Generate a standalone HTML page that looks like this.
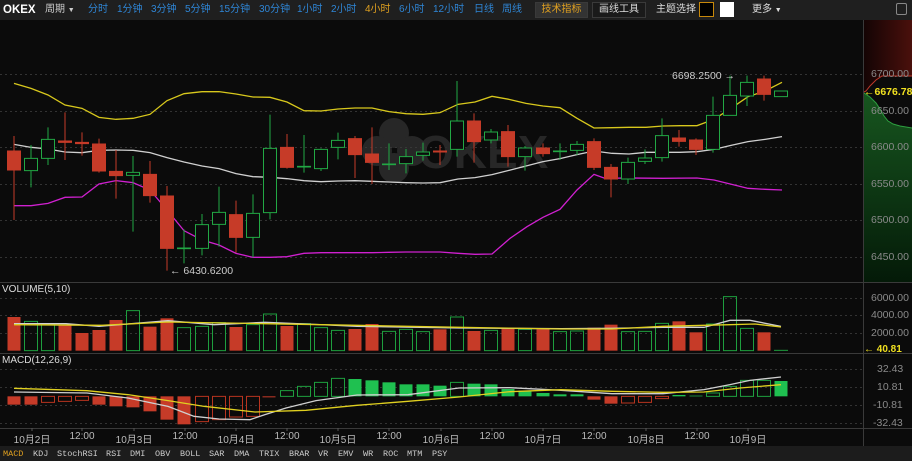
<!DOCTYPE html>
<html><head><meta charset="utf-8"><style>
*{margin:0;padding:0;box-sizing:border-box}
body{width:912px;height:461px;background:#0b0b0b;overflow:hidden;position:relative;font-family:"Liberation Sans","Noto Sans CJK SC",sans-serif}
.t{position:absolute;white-space:nowrap;font-size:10px;line-height:12px}
#top{position:absolute;left:0;top:0;width:912px;height:20px;background:#1f1f1f}
.b{color:#2f86d6}
.ax{color:#8a8a8a;font-size:10.5px}
.btn{position:absolute;top:2px;height:16px;border:1px solid #3a3a3a;font-size:10px;line-height:14px;text-align:center}
#bot{position:absolute;left:0;top:446px;width:912px;height:15px;background:#1c1c1c}
.m{position:absolute;top:3px;font-family:"Liberation Mono",monospace;font-size:8.5px;color:#ccc;line-height:10px}
.dl{color:#bbb;font-size:10px;position:absolute;top:431px;transform:translateX(-50%)}
</style></head><body>
<div id="top"></div>
<div class="t" style="left:3px;top:4px;color:#fff;font-weight:bold;font-size:11.5px">OKEX</div>
<div class="t" style="left:45px;top:4px;color:#ccc">周期 <span style="font-size:7px">▼</span></div>
<div class="t b" style="left:88px;top:4px">分时</div>
<div class="t b" style="left:117px;top:4px">1分钟</div>
<div class="t b" style="left:151px;top:4px">3分钟</div>
<div class="t b" style="left:185px;top:4px">5分钟</div>
<div class="t b" style="left:219px;top:4px">15分钟</div>
<div class="t b" style="left:259px;top:4px">30分钟</div>
<div class="t b" style="left:297px;top:4px">1小时</div>
<div class="t b" style="left:331px;top:4px">2小时</div>
<div class="t" style="left:365px;top:4px;color:#e0a020">4小时</div>
<div class="t b" style="left:399px;top:4px">6小时</div>
<div class="t b" style="left:433px;top:4px">12小时</div>
<div class="t b" style="left:474px;top:4px">日线</div>
<div class="t b" style="left:502px;top:4px">周线</div>
<div class="btn" style="left:535px;width:53px;background:#333;color:#e0a020">技术指标</div>
<div class="btn" style="left:592px;width:54px;background:#1a1a1a;color:#ddd">画线工具</div>
<div class="t" style="left:656px;top:4px;color:#ddd">主题选择</div>
<div style="position:absolute;left:699px;top:2px;width:15px;height:15px;background:#000;border:1px solid #c8880a"></div>
<div style="position:absolute;left:720px;top:2px;width:14px;height:15px;background:#fff"></div>
<div class="t" style="left:752px;top:4px;color:#ddd">更多 <span style="font-size:7px">▼</span></div>
<div style="position:absolute;left:896px;top:3px;width:11px;height:12px;border:1px solid #888;border-radius:2px"></div>

<svg width="912" height="461" style="position:absolute;left:0;top:0">
<defs>
<linearGradient id="rg" x1="0" y1="0" x2="1" y2="0"><stop offset="0" stop-color="#140404"/><stop offset="1" stop-color="#4a100c"/></linearGradient>
<linearGradient id="gg" x1="0" y1="0" x2="0" y2="1"><stop offset="0" stop-color="#17561f"/><stop offset="1" stop-color="#041a08"/></linearGradient>
</defs>
<polygon points="864,20 912,20 912,76 882,76 876,80 870,86 866,91 864,92" fill="url(#rg)"/>
<polyline points="864,92 866,91 870,86 876,80 882,76 912,76" fill="none" stroke="#c0392b" stroke-width="1"/>
<polygon points="864,93 870,97 876,103 880,109 884,116 888,121 893,124 900,126 912,128 912,282 864,282" fill="url(#gg)"/>
<polyline points="864,93 870,97 876,103 880,109 884,116 888,121 893,124 900,126 912,128" fill="none" stroke="#2ea040"/>
<g stroke="#333" stroke-dasharray="2,3">
<line x1="0" y1="74.5" x2="863" y2="74.5"/><line x1="0" y1="111.5" x2="863" y2="111.5"/><line x1="0" y1="147.5" x2="863" y2="147.5"/><line x1="0" y1="184.5" x2="863" y2="184.5"/><line x1="0" y1="220.5" x2="863" y2="220.5"/><line x1="0" y1="257.5" x2="863" y2="257.5"/>
<line x1="0" y1="298.5" x2="863" y2="298.5"/><line x1="0" y1="315.5" x2="863" y2="315.5"/><line x1="0" y1="333.5" x2="863" y2="333.5"/>
<line x1="0" y1="369.5" x2="863" y2="369.5"/><line x1="0" y1="387.5" x2="863" y2="387.5"/><line x1="0" y1="405.5" x2="863" y2="405.5"/><line x1="0" y1="423.5" x2="863" y2="423.5"/>
</g>
<g stroke="#3a3a3a"><line x1="0" y1="282.5" x2="912" y2="282.5"/><line x1="0" y1="353.5" x2="912" y2="353.5"/><line x1="0" y1="428.5" x2="912" y2="428.5"/><line x1="863.5" y1="20" x2="863.5" y2="446"/></g>
<g fill="#3a3a3a" opacity="0.6"><circle cx="394" cy="133" r="15"/><circle cx="377" cy="151" r="15"/><circle cx="412" cy="151" r="15"/><circle cx="394" cy="168" r="15"/></g>
<text x="418" y="168" font-family="Liberation Sans" font-weight="bold" font-size="46" fill="#2c2c2c" opacity="0.85">OKEX</text>
<g stroke="#555"><line x1="32" y1="428" x2="32" y2="431"/><line x1="82" y1="428" x2="82" y2="431"/><line x1="134" y1="428" x2="134" y2="431"/><line x1="185" y1="428" x2="185" y2="431"/><line x1="236" y1="428" x2="236" y2="431"/><line x1="287" y1="428" x2="287" y2="431"/><line x1="338" y1="428" x2="338" y2="431"/><line x1="389" y1="428" x2="389" y2="431"/><line x1="441" y1="428" x2="441" y2="431"/><line x1="492" y1="428" x2="492" y2="431"/><line x1="543" y1="428" x2="543" y2="431"/><line x1="594" y1="428" x2="594" y2="431"/><line x1="646" y1="428" x2="646" y2="431"/><line x1="697" y1="428" x2="697" y2="431"/><line x1="748" y1="428" x2="748" y2="431"/></g>

<svg x="0" y="60" width="912" height="220" viewBox="0 0 912 660" preserveAspectRatio="none">
<g fill="none" stroke-width="1.3">
<polyline vector-effect="non-scaling-stroke" stroke="#d8c81c" points="14,70 31,85 48,105 65,135 82,145 99,172 116,178 133,175 150,163 167,122 184,101 202,95 219,95 236,102 253,111 270,112 287,126 304,152 321,153 338,147 355,144 372,144 389,155 406,161 423,163 440,158 458,133 475,126 492,109 509,118 526,130 543,138 560,143 577,175 594,204 612,203 629,202 646,202 663,198 680,197 697,197 714,178 731,145 748,110 765,93 782,67"/>
<polyline vector-effect="non-scaling-stroke" stroke="#d0d0d0" points="14,253 31,262 48,267 65,276 82,278 99,271 116,270 133,271 150,278 167,293 184,306 202,318 219,326 236,341 253,350 270,352 287,356 304,362 321,365 338,363 355,362 372,364 389,366 406,368 423,369 440,368 458,357 475,353 492,344 509,331 526,318 543,305 560,296 577,284 594,273 612,280 629,282 646,277 663,277 680,277 697,275 714,268 731,256 748,245 765,238 782,230"/>
<polyline vector-effect="non-scaling-stroke" stroke="#d020d0" points="14,437 31,437 48,430 65,412 82,411 99,372 116,362 133,368 150,390 167,450 184,512 202,540 219,555 236,580 253,592 270,592 287,590 304,580 321,578 338,578 355,578 372,578 389,577 406,576 423,576 440,576 458,580 475,583 492,582 510,535 527,500 543,472 560,448 577,390 594,343 605,355 629,354 663,355 697,354 714,360 748,385 765,388 782,390"/>
</g>
<g stroke="#c63b28" fill="#c63b28">
<line vector-effect="non-scaling-stroke" x1="14" x2="14" y1="228" y2="480"/><rect vector-effect="non-scaling-stroke" x="7.5" y="273" width="13" height="57"/>
<line vector-effect="non-scaling-stroke" x1="65" x2="65" y1="157" y2="300"/><rect vector-effect="non-scaling-stroke" x="58.5" y="243" width="13" height="4"/>
<line vector-effect="non-scaling-stroke" x1="82" x2="82" y1="217" y2="287"/><rect vector-effect="non-scaling-stroke" x="75.5" y="247" width="13" height="4"/>
<line vector-effect="non-scaling-stroke" x1="99" x2="99" y1="236" y2="338"/><rect vector-effect="non-scaling-stroke" x="92.5" y="252" width="13" height="81"/>
<line vector-effect="non-scaling-stroke" x1="116" x2="116" y1="270" y2="416"/><rect vector-effect="non-scaling-stroke" x="109.5" y="334" width="13" height="13"/>
<line vector-effect="non-scaling-stroke" x1="150" x2="150" y1="303" y2="428"/><rect vector-effect="non-scaling-stroke" x="143.5" y="343" width="13" height="64"/>
<line vector-effect="non-scaling-stroke" x1="167" x2="167" y1="378" y2="632"/><rect vector-effect="non-scaling-stroke" x="160.5" y="408" width="13" height="157"/>
<line vector-effect="non-scaling-stroke" x1="236" x2="236" y1="422" y2="578"/><rect vector-effect="non-scaling-stroke" x="229.5" y="464" width="13" height="68"/>
<line vector-effect="non-scaling-stroke" x1="287" x2="287" y1="222" y2="326"/><rect vector-effect="non-scaling-stroke" x="280.5" y="262" width="13" height="60"/>
<line vector-effect="non-scaling-stroke" x1="355" x2="355" y1="228" y2="354"/><rect vector-effect="non-scaling-stroke" x="348.5" y="236" width="13" height="48"/>
<line vector-effect="non-scaling-stroke" x1="372" x2="372" y1="202" y2="372"/><rect vector-effect="non-scaling-stroke" x="365.5" y="282" width="13" height="25"/>
<line vector-effect="non-scaling-stroke" x1="440" x2="440" y1="255" y2="315"/><rect vector-effect="non-scaling-stroke" x="433.5" y="273" width="13" height="3"/>
<line vector-effect="non-scaling-stroke" x1="474" x2="474" y1="160" y2="308"/><rect vector-effect="non-scaling-stroke" x="467.5" y="183" width="13" height="62"/>
<line vector-effect="non-scaling-stroke" x1="508" x2="508" y1="195" y2="320"/><rect vector-effect="non-scaling-stroke" x="501.5" y="215" width="13" height="75"/>
<line vector-effect="non-scaling-stroke" x1="543" x2="543" y1="250" y2="290"/><rect vector-effect="non-scaling-stroke" x="536.5" y="264" width="13" height="17"/>
<line vector-effect="non-scaling-stroke" x1="594" x2="594" y1="235" y2="330"/><rect vector-effect="non-scaling-stroke" x="587.5" y="245" width="13" height="77"/>
<line vector-effect="non-scaling-stroke" x1="611" x2="611" y1="312" y2="412"/><rect vector-effect="non-scaling-stroke" x="604.5" y="322" width="13" height="35"/>
<line vector-effect="non-scaling-stroke" x1="679" x2="679" y1="210" y2="260"/><rect vector-effect="non-scaling-stroke" x="672.5" y="234" width="13" height="10"/>
<line vector-effect="non-scaling-stroke" x1="696" x2="696" y1="235" y2="285"/><rect vector-effect="non-scaling-stroke" x="689.5" y="240" width="13" height="28"/>
<line vector-effect="non-scaling-stroke" x1="764" x2="764" y1="47" y2="122"/><rect vector-effect="non-scaling-stroke" x="757.5" y="57" width="13" height="46"/>
</g>
<g stroke="#22a844" fill="#0b0b0b">
<line vector-effect="non-scaling-stroke" x1="31" x2="31" y1="255" y2="382"/><rect vector-effect="non-scaling-stroke" x="24.5" y="295" width="13" height="37"/>
<line vector-effect="non-scaling-stroke" x1="48" x2="48" y1="202" y2="315"/><rect vector-effect="non-scaling-stroke" x="41.5" y="238" width="13" height="57"/>
<line vector-effect="non-scaling-stroke" x1="133" x2="133" y1="288" y2="515"/><rect vector-effect="non-scaling-stroke" x="126.5" y="337" width="13" height="9"/>
<line vector-effect="non-scaling-stroke" x1="184" x2="184" y1="508" y2="610"/><rect vector-effect="non-scaling-stroke" x="177.5" y="564" width="13" height="2"/>
<line vector-effect="non-scaling-stroke" x1="202" x2="202" y1="462" y2="586"/><rect vector-effect="non-scaling-stroke" x="195.5" y="494" width="13" height="71"/>
<line vector-effect="non-scaling-stroke" x1="219" x2="219" y1="380" y2="560"/><rect vector-effect="non-scaling-stroke" x="212.5" y="457" width="13" height="36"/>
<line vector-effect="non-scaling-stroke" x1="253" x2="253" y1="403" y2="592"/><rect vector-effect="non-scaling-stroke" x="246.5" y="460" width="13" height="72"/>
<line vector-effect="non-scaling-stroke" x1="270" x2="270" y1="164" y2="478"/><rect vector-effect="non-scaling-stroke" x="263.5" y="265" width="13" height="193"/>
<line vector-effect="non-scaling-stroke" x1="304" x2="304" y1="225" y2="338"/><rect vector-effect="non-scaling-stroke" x="297.5" y="319" width="13" height="2"/>
<line vector-effect="non-scaling-stroke" x1="321" x2="321" y1="265" y2="333"/><rect vector-effect="non-scaling-stroke" x="314.5" y="268" width="13" height="58"/>
<line vector-effect="non-scaling-stroke" x1="338" x2="338" y1="218" y2="298"/><rect vector-effect="non-scaling-stroke" x="331.5" y="241" width="13" height="21"/>
<line vector-effect="non-scaling-stroke" x1="389" x2="389" y1="250" y2="330"/><rect vector-effect="non-scaling-stroke" x="382.5" y="312" width="13" height="2"/>
<line vector-effect="non-scaling-stroke" x1="406" x2="406" y1="267" y2="340"/><rect vector-effect="non-scaling-stroke" x="399.5" y="290" width="13" height="21"/>
<line vector-effect="non-scaling-stroke" x1="423" x2="423" y1="248" y2="302"/><rect vector-effect="non-scaling-stroke" x="416.5" y="276" width="13" height="10"/>
<line vector-effect="non-scaling-stroke" x1="457" x2="457" y1="63" y2="290"/><rect vector-effect="non-scaling-stroke" x="450.5" y="183" width="13" height="85"/>
<line vector-effect="non-scaling-stroke" x1="491" x2="491" y1="207" y2="250"/><rect vector-effect="non-scaling-stroke" x="484.5" y="216" width="13" height="24"/>
<line vector-effect="non-scaling-stroke" x1="525" x2="525" y1="258" y2="332"/><rect vector-effect="non-scaling-stroke" x="518.5" y="264" width="13" height="26"/>
<line vector-effect="non-scaling-stroke" x1="560" x2="560" y1="250" y2="300"/><rect vector-effect="non-scaling-stroke" x="553.5" y="273" width="13" height="2"/>
<line vector-effect="non-scaling-stroke" x1="577" x2="577" y1="243" y2="285"/><rect vector-effect="non-scaling-stroke" x="570.5" y="253" width="13" height="18"/>
<line vector-effect="non-scaling-stroke" x1="628" x2="628" y1="293" y2="372"/><rect vector-effect="non-scaling-stroke" x="621.5" y="307" width="13" height="50"/>
<line vector-effect="non-scaling-stroke" x1="645" x2="645" y1="268" y2="312"/><rect vector-effect="non-scaling-stroke" x="638.5" y="294" width="13" height="10"/>
<line vector-effect="non-scaling-stroke" x1="662" x2="662" y1="175" y2="305"/><rect vector-effect="non-scaling-stroke" x="655.5" y="227" width="13" height="66"/>
<line vector-effect="non-scaling-stroke" x1="713" x2="713" y1="110" y2="278"/><rect vector-effect="non-scaling-stroke" x="706.5" y="166" width="13" height="102"/>
<line vector-effect="non-scaling-stroke" x1="730" x2="730" y1="47" y2="166"/><rect vector-effect="non-scaling-stroke" x="723.5" y="106" width="13" height="60"/>
<line vector-effect="non-scaling-stroke" x1="747" x2="747" y1="47" y2="138"/><rect vector-effect="non-scaling-stroke" x="740.5" y="67" width="13" height="41"/>
<rect vector-effect="non-scaling-stroke" x="774.5" y="93" width="13" height="17"/>
</g>
</svg>

<svg x="0" y="283" width="912" height="70" viewBox="0 0 912 210" preserveAspectRatio="none">
<g fill="#c63b28">
<rect x="7.5" y="102" width="13" height="101"/><rect x="58.5" y="125" width="13" height="78"/><rect x="75.5" y="150" width="13" height="53"/><rect x="92.5" y="141" width="13" height="62"/><rect x="109.5" y="111" width="13" height="92"/><rect x="143.5" y="131" width="13" height="72"/><rect x="160.5" y="106" width="13" height="97"/><rect x="229.5" y="132" width="13" height="71"/><rect x="280.5" y="129" width="13" height="74"/><rect x="348.5" y="138" width="13" height="65"/><rect x="365.5" y="123" width="13" height="80"/><rect x="433.5" y="139" width="13" height="64"/><rect x="467.5" y="144" width="13" height="59"/><rect x="501.5" y="137" width="13" height="66"/><rect x="536.5" y="139" width="13" height="64"/><rect x="587.5" y="134" width="13" height="69"/><rect x="604.5" y="125" width="13" height="78"/><rect x="672.5" y="115" width="13" height="88"/><rect x="689.5" y="148" width="13" height="55"/><rect x="757.5" y="148" width="13" height="55"/>
</g>
<g fill="none" stroke="#1e9e3e">
<rect vector-effect="non-scaling-stroke" x="24.5" y="115" width="13" height="88"/><rect vector-effect="non-scaling-stroke" x="41.5" y="125" width="13" height="78"/><rect vector-effect="non-scaling-stroke" x="126.5" y="83" width="13" height="120"/><rect vector-effect="non-scaling-stroke" x="177.5" y="134" width="13" height="69"/><rect vector-effect="non-scaling-stroke" x="195.5" y="130" width="13" height="73"/><rect vector-effect="non-scaling-stroke" x="212.5" y="119" width="13" height="84"/><rect vector-effect="non-scaling-stroke" x="246.5" y="125" width="13" height="78"/><rect vector-effect="non-scaling-stroke" x="263.5" y="93" width="13" height="110"/><rect vector-effect="non-scaling-stroke" x="297.5" y="122" width="13" height="81"/><rect vector-effect="non-scaling-stroke" x="314.5" y="134" width="13" height="69"/><rect vector-effect="non-scaling-stroke" x="331.5" y="142" width="13" height="61"/><rect vector-effect="non-scaling-stroke" x="382.5" y="145" width="13" height="58"/><rect vector-effect="non-scaling-stroke" x="399.5" y="139" width="13" height="64"/><rect vector-effect="non-scaling-stroke" x="416.5" y="146" width="13" height="57"/><rect vector-effect="non-scaling-stroke" x="450.5" y="102" width="13" height="101"/><rect vector-effect="non-scaling-stroke" x="484.5" y="142" width="13" height="61"/><rect vector-effect="non-scaling-stroke" x="518.5" y="139" width="13" height="64"/><rect vector-effect="non-scaling-stroke" x="553.5" y="146" width="13" height="57"/><rect vector-effect="non-scaling-stroke" x="570.5" y="144" width="13" height="59"/><rect vector-effect="non-scaling-stroke" x="621.5" y="146" width="13" height="57"/><rect vector-effect="non-scaling-stroke" x="638.5" y="145" width="13" height="58"/><rect vector-effect="non-scaling-stroke" x="655.5" y="121" width="13" height="82"/><rect vector-effect="non-scaling-stroke" x="706.5" y="123" width="13" height="80"/><rect vector-effect="non-scaling-stroke" x="723.5" y="41" width="13" height="162"/><rect vector-effect="non-scaling-stroke" x="740.5" y="136" width="13" height="67"/><line vector-effect="non-scaling-stroke" x1="774" x2="788" y1="202" y2="202"/>
</g>
<polyline vector-effect="non-scaling-stroke" fill="none" stroke="#d0d0d0" stroke-width="1.3" points="14,122 66,122 99,130 168,113 214,125 265,118 306,123 357,130 459,135 561,137 612,136 663,133 704,133 730,112 750,112 781,130"/>
<polyline vector-effect="non-scaling-stroke" fill="none" stroke="#e0d020" stroke-width="1.3" points="14,125 102,127 168,117 265,122 357,127 459,133 561,138 612,138 663,130 730,125 755,123 781,132"/>
</svg>

<svg x="0" y="353" width="912" height="75" viewBox="0 0 912 225" preserveAspectRatio="none">
<g fill="#c63b28">
<rect x="7.5" y="130" width="13" height="25"/><rect x="24.5" y="130" width="13" height="25"/><rect x="92.5" y="130" width="13" height="25"/><rect x="109.5" y="130" width="13" height="30"/><rect x="126.5" y="130" width="13" height="33"/><rect x="143.5" y="130" width="13" height="45"/><rect x="160.5" y="130" width="13" height="70"/><rect x="177.5" y="130" width="13" height="84"/><rect x="262.5" y="130" width="13" height="3"/><rect x="587.5" y="130" width="13" height="10"/><rect x="604.5" y="130" width="13" height="22"/>
</g>
<g fill="none" stroke="#b8341f">
<rect vector-effect="non-scaling-stroke" x="41.5" y="130" width="13" height="18"/><rect vector-effect="non-scaling-stroke" x="58.5" y="130" width="13" height="15"/><rect vector-effect="non-scaling-stroke" x="75.5" y="130" width="13" height="12"/><rect vector-effect="non-scaling-stroke" x="195.5" y="130" width="13" height="76"/><rect vector-effect="non-scaling-stroke" x="212.5" y="130" width="13" height="70"/><rect vector-effect="non-scaling-stroke" x="229.5" y="130" width="13" height="62"/><rect vector-effect="non-scaling-stroke" x="246.5" y="130" width="13" height="60"/><rect vector-effect="non-scaling-stroke" x="621.5" y="130" width="13" height="20"/><rect vector-effect="non-scaling-stroke" x="638.5" y="130" width="13" height="18"/><rect vector-effect="non-scaling-stroke" x="655.5" y="130" width="13" height="7"/>
</g>
<g fill="#1fc050">
<rect x="348.5" y="78" width="13" height="52"/><rect x="365.5" y="82" width="13" height="48"/><rect x="382.5" y="88" width="13" height="42"/><rect x="399.5" y="94" width="13" height="36"/><rect x="416.5" y="94" width="13" height="36"/><rect x="433.5" y="98" width="13" height="32"/><rect x="467.5" y="92" width="13" height="38"/><rect x="484.5" y="94" width="13" height="36"/><rect x="501.5" y="108" width="13" height="22"/><rect x="518.5" y="113" width="13" height="17"/><rect x="536.5" y="120" width="13" height="10"/><rect x="553.5" y="124" width="13" height="6"/><rect x="570.5" y="124" width="13" height="6"/><rect x="672.5" y="126" width="13" height="4"/><rect x="689.5" y="128" width="13" height="2"/><rect x="774.5" y="84" width="13" height="46"/>
</g>
<g fill="none" stroke="#1e9e3e">
<rect vector-effect="non-scaling-stroke" x="280.5" y="113" width="13" height="17"/><rect vector-effect="non-scaling-stroke" x="297.5" y="100" width="13" height="30"/><rect vector-effect="non-scaling-stroke" x="314.5" y="88" width="13" height="42"/><rect vector-effect="non-scaling-stroke" x="331.5" y="76" width="13" height="54"/><rect vector-effect="non-scaling-stroke" x="450.5" y="88" width="13" height="42"/><rect vector-effect="non-scaling-stroke" x="706.5" y="120" width="13" height="10"/><rect vector-effect="non-scaling-stroke" x="723.5" y="100" width="13" height="30"/><rect vector-effect="non-scaling-stroke" x="740.5" y="82" width="13" height="48"/><rect vector-effect="non-scaling-stroke" x="757.5" y="82" width="13" height="48"/>
</g>
<polyline vector-effect="non-scaling-stroke" fill="none" stroke="#d0d0d0" stroke-width="1.3" points="14,117 87,120 128,135 168,160 194,190 219,198 250,200 265,185 286,165 316,143 357,126 408,125 459,105 510,104 561,112 612,122 663,122 704,110 730,95 750,82 781,72"/>
<polyline vector-effect="non-scaling-stroke" fill="none" stroke="#e0d020" stroke-width="1.3" points="14,106 87,113 128,125 168,143 204,160 255,177 306,172 357,157 408,145 459,132 510,116 561,110 612,115 663,118 704,117 740,105 781,95"/>
</svg>
</svg>

<div class="t" style="left:170px;top:265px;color:#ccc;font-size:10.5px">← 6430.6200</div>
<div class="t" style="left:672px;top:70px;color:#ccc;font-size:10.5px">6698.2500 →</div>

<div class="t ax" style="left:871px;top:68px">6700.00</div>
<div class="t ax" style="left:871px;top:105px">6650.00</div>
<div class="t ax" style="left:871px;top:141px">6600.00</div>
<div class="t ax" style="left:871px;top:178px">6550.00</div>
<div class="t ax" style="left:871px;top:214px">6500.00</div>
<div class="t ax" style="left:871px;top:251px">6450.00</div>
<div class="t" style="left:864px;top:86px;color:#f0e020;font-weight:bold;font-size:10.5px">←6676.784</div>
<div class="t" style="left:2px;top:284px;color:#ddd">VOLUME(5,10)</div>
<div class="t ax" style="left:871px;top:292px">6000.00</div>
<div class="t ax" style="left:871px;top:309px">4000.00</div>
<div class="t ax" style="left:871px;top:327px">2000.00</div>
<div class="t" style="left:864px;top:344px;color:#f0e020;font-weight:bold">← 40.81</div>
<div class="t" style="left:2px;top:355px;color:#ddd">MACD(12,26,9)</div>
<div class="t ax" style="left:877px;top:363px">32.43</div>
<div class="t ax" style="left:877px;top:381px">10.81</div>
<div class="t ax" style="left:873px;top:399px">-10.81</div>
<div class="t ax" style="left:873px;top:417px">-32.43</div>

<div class="dl" style="left:32px">10月2日</div><div class="dl" style="left:82px">12:00</div><div class="dl" style="left:134px">10月3日</div><div class="dl" style="left:185px">12:00</div><div class="dl" style="left:236px">10月4日</div><div class="dl" style="left:287px">12:00</div><div class="dl" style="left:338px">10月5日</div><div class="dl" style="left:389px">12:00</div><div class="dl" style="left:441px">10月6日</div><div class="dl" style="left:492px">12:00</div><div class="dl" style="left:543px">10月7日</div><div class="dl" style="left:594px">12:00</div><div class="dl" style="left:646px">10月8日</div><div class="dl" style="left:697px">12:00</div><div class="dl" style="left:748px">10月9日</div>

<div id="bot">
<span class="m" style="left:3px;color:#e0a020">MACD</span><span class="m" style="left:33px">KDJ</span><span class="m" style="left:57px">StochRSI</span><span class="m" style="left:106px">RSI</span><span class="m" style="left:130px">DMI</span><span class="m" style="left:155px">OBV</span><span class="m" style="left:180px">BOLL</span><span class="m" style="left:209px">SAR</span><span class="m" style="left:234px">DMA</span><span class="m" style="left:259px">TRIX</span><span class="m" style="left:289px">BRAR</span><span class="m" style="left:318px">VR</span><span class="m" style="left:338px">EMV</span><span class="m" style="left:363px">WR</span><span class="m" style="left:383px">ROC</span><span class="m" style="left:407px">MTM</span><span class="m" style="left:432px">PSY</span>
</div>
</body></html>
